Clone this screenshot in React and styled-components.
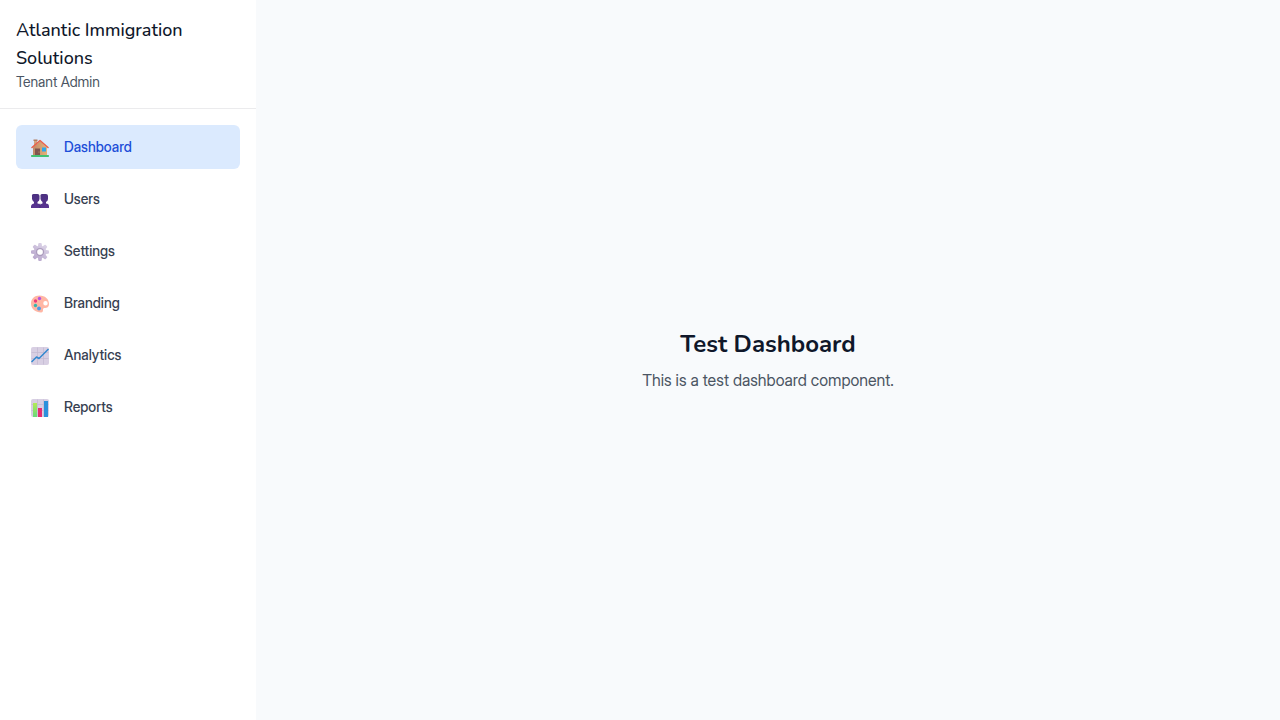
import React from "react";
import styled, { createGlobalStyle, css } from "styled-components";

const GlobalStyle = createGlobalStyle`
  *, *::before, *::after { box-sizing: border-box; }
  body {
    margin: 0;
    font-family: "Inter Display", Inter, "Liberation Sans", sans-serif;
    background: #f8fafc;
    color: #0f172a;
  }
  h1, h2, p, ul { margin: 0; padding: 0; }
  h1, h2 {
    font-family: Nunito, Lato, "Open Sans", sans-serif;
    font-variant-ligatures: none;
  }
`;

const Layout = styled.div`
  display: flex;
  min-height: 100vh;
  background: #f8fafc;
`;

const Sidebar = styled.aside`
  flex: 0 0 256px;
  background: #ffffff;
`;

const Brand = styled.header`
  padding: 16px;
  border-bottom: 1px solid #ebebed;
`;

const BrandName = styled.h2`
  font-size: 18px;
  line-height: 28px;
  font-weight: 500;
  color: #0f172a;
`;

const Role = styled.p`
  font-size: 14px;
  line-height: 20px;
  color: #4b5563;
`;

const NavList = styled.ul`
  display: flex;
  flex-direction: column;
  gap: 8px;
  padding: 16px;
  list-style: none;
`;

const NavLink = styled.a`
  display: flex;
  align-items: center;
  gap: 12px;
  height: 44px;
  padding: 0 12px;
  border-radius: 6px;
  font-size: 14px;
  line-height: 20px;
  font-weight: 500;
  text-decoration: none;
  color: #374151;
  ${({ $active }) =>
    $active &&
    css`
      background: #dbeafe;
      color: #1d4ed8;
    `}
`;

const IconSlot = styled.span`
  display: flex;
  justify-content: center;
  width: 24px;
  padding-top: 2px;
`;

const Icon = styled.svg.attrs({ viewBox: "0 0 36 36", "aria-hidden": true })`
  display: block;
  width: 18px;
  height: 18px;
`;

const Main = styled.main`
  flex: 1;
  display: flex;
  flex-direction: column;
  align-items: center;
  justify-content: center;
  gap: 8px;
  text-align: center;
`;

const Title = styled.h1`
  font-size: 24px;
  line-height: 32px;
  font-weight: 700;
  color: #0f172a;
`;

const Description = styled.p`
  font-size: 16px;
  line-height: 24px;
  color: #4b5563;
`;

const HouseIcon = () => (
  <Icon>
    <defs>
      <linearGradient id="wall" x1="0" x2="1">
        <stop offset="0" stopColor="#c08a68" />
        <stop offset="1" stopColor="#e6b27a" />
      </linearGradient>
    </defs>
    <path d="M6 3h6v13H6z" fill="#d0a582" />
    <path d="M5 1h8v3H5z" fill="#b07d60" />
    <path d="M4 17 18 4l14 13v16H4z" fill="url(#wall)" />
    <path d="M8 19h10v14H8z" fill="#80564f" />
    <circle cx="16" cy="26" r="1" fill="#d9b16f" />
    <path d="M22 17h8v8h-8z" fill="#2fa8ea" />
    <path d="m2 17 16-14 16 14" fill="none" stroke="#e8604a" strokeWidth="3" strokeLinecap="round" strokeLinejoin="round" />
    <rect y="32" width="36" height="4" rx="1.5" fill="#43c275" />
  </Icon>
);

const UsersIcon = () => (
  <Icon>
    <defs>
      <linearGradient id="people" x1="0" y1="0" x2="0" y2="1">
        <stop offset="0" stopColor="#4b3080" />
        <stop offset="1" stopColor="#5a3592" />
      </linearGradient>
      <path
        id="bust"
        d="M2 9Q1 4 5 4h8q4 0 4 4v6q0 4-4 6v3l4 1q2 1 2 5v3H0v-3q0-4 3-5l3-1v-3q-3-2-4-6z"
      />
    </defs>
    <use href="#bust" y="2" fill="url(#people)" />
    <use href="#bust" x="17" y="2" fill="url(#people)" />
    <path d="M18 25v9" stroke="#3b2468" strokeWidth="1" />
  </Icon>
);

const GearIcon = () => (
  <Icon>
    <defs>
      <linearGradient id="gear" gradientUnits="userSpaceOnUse" x1="30" y1="4" x2="6" y2="32">
        <stop offset="0" stopColor="#ddd5e8" />
        <stop offset="1" stopColor="#b7a6cc" />
      </linearGradient>
      <mask id="teeth">
        <rect width="36" height="36" fill="#000000" />
        {[0, 45, 90, 135, 180, 225, 270, 315].map((angle) => (
          <path
            key={angle}
            d="M14.5 2q0-2 2-2h3q2 0 2 2l1 8h-9z"
            fill="#ffffff"
            transform={`rotate(${angle} 18 18)`}
          />
        ))}
        <circle cx="18" cy="18" r="12.5" fill="#ffffff" />
      </mask>
    </defs>
    <rect width="36" height="36" fill="url(#gear)" mask="url(#teeth)" />
    <circle cx="18" cy="18" r="7" fill="none" stroke="#ab9cbc" strokeWidth="2.5" />
    <circle cx="18" cy="18" r="5.5" fill="#ffffff" />
  </Icon>
);

const PaletteIcon = () => (
  <Icon>
    <path
      fill="#ffb6a4"
      fillRule="evenodd"
      d="M17 1C28 1 36 8 36 18c0 6-4 8-8 8-3 0-4 1-4 3 0 3 0 6-4 6C9 35 0 28 0 17 0 8 7 1 17 1Zm12 11a4.5 4.5 0 1 0 0 9 4.5 4.5 0 0 0 0-9Z"
    />
    <circle cx="17" cy="7" r="3.4" fill="#b653e0" />
    <circle cx="9" cy="12" r="3.4" fill="#ef3c78" />
    <circle cx="9" cy="21" r="3.4" fill="#36b6ad" />
    <circle cx="16" cy="27" r="3.8" fill="#4c9be8" />
  </Icon>
);

const ChartSheet = () => (
  <>
    <rect width="36" height="36" rx="4" fill="#d8cfe3" />
    <path d="M1 11h34M1 23h34M13 1v34M25 1v34" stroke="#c3b9d1" strokeWidth="1.5" />
  </>
);

const TrendIcon = () => (
  <Icon>
    <ChartSheet />
    <path d="m1 30 10-10 5 3 19-19" fill="none" stroke="#3288cf" strokeWidth="3" strokeLinejoin="round" />
  </Icon>
);

const BarsIcon = () => (
  <Icon>
    <defs>
      <linearGradient id="greenBar" x1="0" x2="0" y1="0" y2="1">
        <stop offset="0" stopColor="#b4ea57" />
        <stop offset="1" stopColor="#68d87c" />
      </linearGradient>
    </defs>
    <ChartSheet />
    <path d="M4 8h8v28H4z" fill="url(#greenBar)" />
    <path d="M14 18h8v18h-8z" fill="#e62c70" />
    <path d="M26 4h8v32h-8z" fill="#2c91dc" />
  </Icon>
);

const navItems = [
  { label: "Dashboard", Glyph: HouseIcon, active: true },
  { label: "Users", Glyph: UsersIcon },
  { label: "Settings", Glyph: GearIcon },
  { label: "Branding", Glyph: PaletteIcon },
  { label: "Analytics", Glyph: TrendIcon },
  { label: "Reports", Glyph: BarsIcon },
];

export default function App() {
  return (
    <>
      <GlobalStyle />
      <Layout>
        <Sidebar>
          <Brand>
            <BrandName>Atlantic Immigration Solutions</BrandName>
            <Role>Tenant Admin</Role>
          </Brand>
          <nav>
            <NavList>
              {navItems.map(({ label, Glyph, active }) => (
                <li key={label}>
                  <NavLink
                    href={`#${label.toLowerCase()}`}
                    $active={active}
                    aria-current={active ? "page" : undefined}
                  >
                    <IconSlot>
                      <Glyph />
                    </IconSlot>
                    {label}
                  </NavLink>
                </li>
              ))}
            </NavList>
          </nav>
        </Sidebar>
        <Main>
          <Title>Test Dashboard</Title>
          <Description>This is a test dashboard component.</Description>
        </Main>
      </Layout>
    </>
  );
}
